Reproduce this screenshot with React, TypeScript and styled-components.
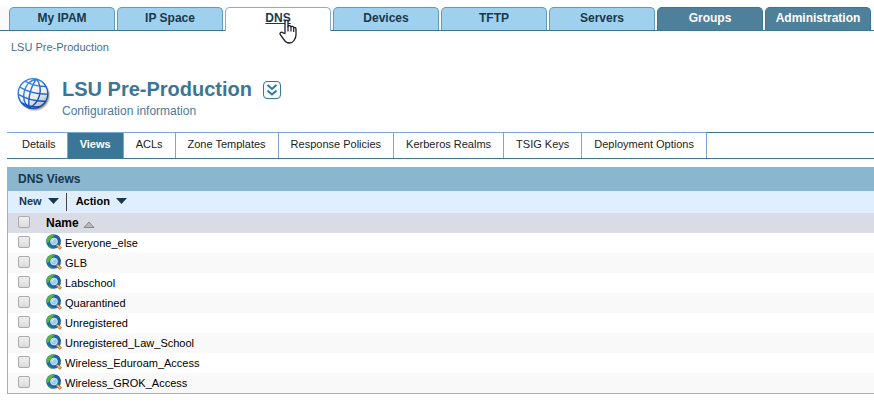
import React from 'react';
import styled, { createGlobalStyle, css } from 'styled-components';

const GlobalStyle = createGlobalStyle`
  body {
    margin: 0;
    background: #fff;
    font-family: 'Liberation Sans', Arial, Helvetica, sans-serif;
    font-size: 11px;
    color: #000;
  }
  * { box-sizing: border-box; }
`;

type Tone = 'light' | 'active' | 'dark';

const Page = styled.div`
  padding-top: 6px;
`;

const MainNav = styled.nav`
  display: flex;
  gap: 2px;
  height: 25px;
  padding: 1px 3px 0 9px;
  background: #fafafa;
  border-bottom: 1px solid #3a7797;
`;

const tones = {
  light: css`
    background: #9fd0ee;
    border-color: #5f9cbf;
    color: #17394b;
  `,
  active: css`
    background: #fff;
    border-color: #86aedb;
    color: #17394b;
    margin-bottom: -1px;
    text-decoration: underline;
  `,
  dark: css`
    background: #4f8099;
    border-color: #3a7797;
    color: #fff;
  `,
};

const MainTab = styled.a<{ $tone: Tone }>`
  position: relative;
  flex: 0 1 106px;
  border: 1px solid;
  border-bottom: 0;
  border-radius: 5px 5px 0 0;
  text-align: center;
  font-size: 12px;
  font-weight: bold;
  line-height: 20px;
  white-space: nowrap;
  text-decoration: none;
  ${({ $tone }) => tones[$tone]}
`;

const Pointer = styled.svg`
  position: absolute;
  left: 53px;
  top: 11px;
  z-index: 1;
`;

const Breadcrumb = styled.a`
  display: block;
  width: max-content;
  margin: 9px 0 0 11px;
  line-height: 14px;
  color: #44708f;
  text-decoration: none;
`;

const Header = styled.header`
  display: flex;
  gap: 10px;
  padding: 22px 0 0 17px;
`;

const TitleRow = styled.div`
  display: flex;
  align-items: center;
  gap: 11px;
  height: 26px;
`;

const Title = styled.h1`
  margin: 0;
  font-size: 20px;
  line-height: 26px;
  color: #3a7797;
`;

const ExpandButton = styled.button`
  display: flex;
  margin-top: 2px;
  padding: 0;
  border: 0;
  background: none;
`;

const Subtitle = styled.p`
  margin: 1px 0 0;
  font-size: 12px;
  line-height: 16px;
  color: #4c7a97;
`;

const SubNav = styled.nav`
  display: flex;
  height: 27px;
  margin: 13px 0 8px 7px;
  border-top: 1px solid #3a7797;
  border-bottom: 1px solid #3a7797;
`;

const SubTab = styled.a<{ $active?: boolean }>`
  margin-top: -1px;
  padding: 0 12px;
  border-top: 1px solid #7ba7d8;
  border-right: 1px solid #7ba7d8;
  line-height: 22px;
  color: #222;
  white-space: nowrap;
  text-decoration: none;
  &:first-child {
    padding: 0 11px 0 15px;
  }
  ${({ $active }) =>
    $active &&
    css`
      background: #3a7797;
      color: #fff;
      font-weight: bold;
    `}
`;

const Panel = styled.section`
  margin-left: 7px;
  border-left: 1px solid #9fb2c6;
  border-bottom: 1px solid #9fb2c6;
`;

const PanelTitle = styled.h2`
  margin: 0;
  padding-left: 10px;
  font-size: 12px;
  line-height: 24px;
  color: #17394b;
  background: #8bb6cf;
`;

const Toolbar = styled.div`
  display: flex;
  align-items: center;
  height: 22px;
  padding-left: 11px;
  background: #dfefff;
`;

const MenuButton = styled.button<{ $strong?: boolean }>`
  display: flex;
  align-items: center;
  gap: 6px;
  padding: 0 0 2px;
  border: 0;
  background: none;
  font: bold 11px 'Liberation Sans', Arial, sans-serif;
  color: ${({ $strong }) => ($strong ? '#000' : '#17394b')};
`;

const Divider = styled.span`
  width: 1px;
  height: 18px;
  margin: 0 9px 0 7px;
  background: #444;
`;

const ViewTable = styled.table`
  width: 100%;
  border-collapse: collapse;
  table-layout: fixed;
`;

const HeadRow = styled.tr`
  height: 20px;
  background: #dadce5;
`;

const Row = styled.tr`
  height: 20px;
  &:nth-child(even) {
    background: #f9f9f9;
  }
`;

const CheckCell = styled.td`
  width: 38px;
  padding: 0 0 0 10px;
`;

const CheckBox = styled.input`
  display: block;
  appearance: none;
  width: 12px;
  height: 12px;
  margin: 0 0 2px;
  border: 1px solid #a9a9a9;
  border-radius: 2px;
  background: linear-gradient(#efefef, #dcdcdc);
`;

const NameHead = styled.th`
  padding: 0;
  text-align: left;
  font-size: 12px;
  line-height: 20px;
`;

const HeadContent = styled.span`
  display: flex;
  align-items: center;
  gap: 4px;
  svg {
    margin-top: 2px;
  }
`;

const NameCell = styled.td`
  padding: 0;
`;

const ViewLink = styled.a`
  display: flex;
  align-items: center;
  gap: 3px;
  width: max-content;
  height: 20px;
  line-height: 20px;
  color: #000;
  text-decoration: none;
  svg {
    margin-bottom: 3px;
  }
`;

const HandPointer = () => (
  <Pointer width="18" height="25" viewBox="0 0 18 25" aria-hidden="true">
    <path
      d="M6 14.5V2.8C6 .5 9 .5 9 2.800V7.500c.4-1.300 2.800-1.200 3 .4.6-1 2.500-.7 2.700.8.8-.6 2.300 0 2.300 1.500V16c0 2-1 4-2 5.500-1.300 1.900-2.400 2.500-4.500 2.500-2.700 0-4.200-1-5.300-3L1.300 15.700C.3 13.700 2.300 12.300 4 13.800z"
      fill="#fff"
      stroke="#1c1c2c"
      strokeWidth="1.300"
      strokeLinejoin="round"
    />
    <path d="M9 7v5.500M12 8v4.500M14.700 9v4" stroke="#1c1c2c" strokeWidth="1.200" />
  </Pointer>
);

const Globe = () => (
  <svg width="35" height="36" viewBox="0 0 35 36" aria-hidden="true">
    <defs>
      <linearGradient id="globeFill" x1="0.200" y1="0" x2="0.800" y2="1">
        <stop offset="0" stopColor="#fff" />
        <stop offset="0.600" stopColor="#eceef1" />
        <stop offset="1" stopColor="#a8b2c4" />
      </linearGradient>
      <radialGradient id="globeShade">
        <stop offset="0.800" stopColor="#333" stopOpacity="0.700" />
        <stop offset="1" stopColor="#333" stopOpacity="0" />
      </radialGradient>
      <linearGradient id="globeLine" x1="0" y1="0" x2="1" y2="1">
        <stop offset="0" stopColor="#4a94ee" />
        <stop offset="0.500" stopColor="#1f66d2" />
        <stop offset="1" stopColor="#0a3a9a" />
      </linearGradient>
    </defs>
    <circle cx="17.500" cy="19.500" r="16" fill="url(#globeShade)" />
    <circle cx="16.200" cy="17.700" r="15" fill="url(#globeFill)" />
    <g
      transform="translate(0 1) rotate(14 16 16.500)"
      fill="none"
      stroke="url(#globeLine)"
      strokeWidth="1.400"
    >
      <circle cx="16" cy="16.500" r="14.800" />
      <path d="M16 1.500C4 7 4 26 16 31.500M16 1.500c-4 8-4 22 0 30M16 1.500c9 8 9 22 0 30" />
      <path d="M5 6.500q11 3 22 0M1.500 13.500q14.500 4 29 0M2 21q14 4 28 0M6.500 28q9.500 3 19 0" />
    </g>
  </svg>
);

const ExpandIcon = () => (
  <svg width="18" height="18" viewBox="0 0 18 18" fill="none" stroke="#3a7797" aria-hidden="true">
    <rect x="0.500" y="0.500" width="17" height="17" rx="3.500" fill="#f5fafc" />
    <path d="M4.500 4l4.500 4 4.500-4M4.500 9.500l4.500 4 4.500-4" strokeWidth="2" />
  </svg>
);

const ViewIcon = () => (
  <svg width="16" height="16" viewBox="0 0 16 16" aria-hidden="true">
    <circle cx="7.500" cy="7.500" r="7.300" fill="#1c62b8" />
    <path d="M.3 8.500C0 4 3 .5 7 .3L8.500 1.500 6 3.500 4 6 2.500 8.500z" fill="#5cb338" />
    <path d="M10 .8c3 1 4.600 3.500 4.800 6.700L13 7.500 12 4z" fill="#2b5f6a" />
    <path d="M1.500 11.500l3 .5 2 2.700C4.500 14.700 2.500 13.500 1.500 11.500z" fill="#3f9a3a" />
    <path d="M12 9.500l2.700-.8c-.2 2-.9 3.300-2 4.300z" fill="#266e37" />
    <path d="M10.800 10.800l4 4" stroke="#a0622c" strokeWidth="3" />
    <path d="M11 11l3.400 3.400" stroke="#f9b36a" strokeWidth="1.700" />
    <circle cx="8" cy="7.500" r="3.400" fill="#8fd0f0" stroke="#cfe3f2" />
    <path d="M6.200 7.500c0-1.300.8-2 2-2" stroke="#fff" fill="none" />
  </svg>
);

const DownArrow = () => (
  <svg width="11" height="6" viewBox="0 0 11 6" aria-hidden="true">
    <path d="M0 0h11L5.500 6z" fill="#17394b" />
  </svg>
);

const SortArrow = () => (
  <svg width="12" height="7" viewBox="0 0 12 7" aria-hidden="true">
    <path d="M1 6.500h10L6 1z" fill="#b9b9b9" stroke="#888" />
  </svg>
);

const mainTabs: { label: string; tone: Tone }[] = [
  { label: 'My IPAM', tone: 'light' },
  { label: 'IP Space', tone: 'light' },
  { label: 'DNS', tone: 'active' },
  { label: 'Devices', tone: 'light' },
  { label: 'TFTP', tone: 'light' },
  { label: 'Servers', tone: 'light' },
  { label: 'Groups', tone: 'dark' },
  { label: 'Administration', tone: 'dark' },
];

const subTabs = [
  'Details',
  'Views',
  'ACLs',
  'Zone Templates',
  'Response Policies',
  'Kerberos Realms',
  'TSIG Keys',
  'Deployment Options',
];

const views = [
  'Everyone_else',
  'GLB',
  'Labschool',
  'Quarantined',
  'Unregistered',
  'Unregistered_Law_School',
  'Wireless_Eduroam_Access',
  'Wireless_GROK_Access',
];

export default function App() {
  return (
    <Page>
      <GlobalStyle />
      <MainNav aria-label="Main">
        {mainTabs.map(({ label, tone }) => (
          <MainTab key={label} href="#" $tone={tone}>
            {label}
            {tone === 'active' && <HandPointer />}
          </MainTab>
        ))}
      </MainNav>
      <Breadcrumb href="#">LSU Pre-Production</Breadcrumb>
      <Header>
        <Globe />
        <div>
          <TitleRow>
            <Title>LSU Pre-Production</Title>
            <ExpandButton type="button" aria-label="Show details">
              <ExpandIcon />
            </ExpandButton>
          </TitleRow>
          <Subtitle>Configuration information</Subtitle>
        </div>
      </Header>
      <SubNav aria-label="Configuration">
        {subTabs.map((label) => (
          <SubTab key={label} href="#" $active={label === 'Views'}>
            {label}
          </SubTab>
        ))}
      </SubNav>
      <Panel>
        <PanelTitle>DNS Views</PanelTitle>
        <Toolbar>
          <MenuButton type="button">
            New <DownArrow />
          </MenuButton>
          <Divider />
          <MenuButton type="button" $strong>
            Action <DownArrow />
          </MenuButton>
        </Toolbar>
        <ViewTable>
          <thead>
            <HeadRow>
              <CheckCell>
                <CheckBox type="checkbox" aria-label="Select all views" />
              </CheckCell>
              <NameHead scope="col">
                <HeadContent>
                  Name <SortArrow />
                </HeadContent>
              </NameHead>
            </HeadRow>
          </thead>
          <tbody>
            {views.map((name) => (
              <Row key={name}>
                <CheckCell>
                  <CheckBox type="checkbox" aria-label={`Select ${name}`} />
                </CheckCell>
                <NameCell>
                  <ViewLink href="#">
                    <ViewIcon />
                    {name}
                  </ViewLink>
                </NameCell>
              </Row>
            ))}
          </tbody>
        </ViewTable>
      </Panel>
    </Page>
  );
}
